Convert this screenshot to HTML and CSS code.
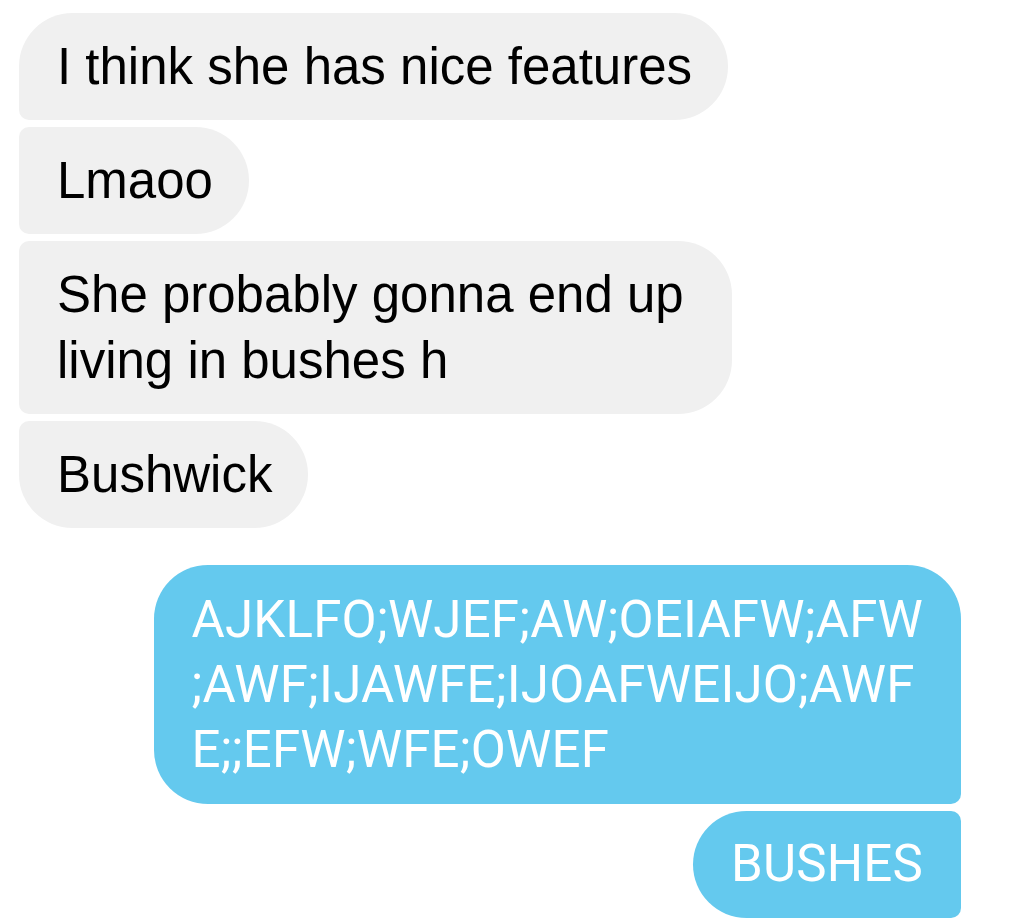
FILE: index.html
```html
<!DOCTYPE html>
<html lang="en">
<head>
    <meta charset="UTF-8">
    <meta name="viewport" content="width=device-width, initial-scale=1.0">
    <title>Messages</title>
    <link rel="stylesheet" href="styles.css">
</head>
<body>
    <div class="thread">
        <div class="group received">
            <div class="bubble first">I think she has nice features</div>
            <div class="bubble middle">Lmaoo</div>
            <div class="bubble middle wrapped">She probably gonna end up<br>living in bushes h</div>
            <div class="bubble last">Bushwick</div>
        </div>

        <div class="group sent">
            <div class="bubble first">AJKLFO;WJEF;AW;OEIAFW;AFW<br>;AWF;IJAWFE;IJOAFWEIJO;AWF<br>E;;EFW;WFE;OWEF</div>
            <div class="bubble middle">BUSHES</div>
        </div>
    </div>
</body>
</html>
```

FILE: styles.css
```css
body {
    margin: 0;
    background-color: #ffffff;
    font-family: "Liberation Sans", Arial, sans-serif;
}

.thread {
    padding: 13px 72px 0 19px;
    display: flex;
    flex-direction: column;
    gap: 37px;
}

.group {
    display: flex;
    flex-direction: column;
    gap: 7px;
}

.received {
    align-items: flex-start;
}

.sent {
    align-items: flex-end;
}

.bubble {
    font-size: 51px;
    line-height: 66px;
    padding: 21px 36px 20px 38px;
    border-radius: 54px;
    white-space: nowrap;
}

/* grey bubbles on the left */
.received .bubble {
    background-color: #f0f0f0;
    color: #000000;
}

.received .first {
    border-bottom-left-radius: 10px;
}

.received .middle {
    border-top-left-radius: 10px;
    border-bottom-left-radius: 10px;
}

.received .wrapped {
    padding-right: 48px;
}

.received .last {
    border-top-left-radius: 10px;
}

/* blue bubbles on the right */
.sent .bubble {
    background-color: #64c9ee;
    color: #ffffff;
    font-family: Roboto, "Liberation Sans", sans-serif;
    padding: 22px 38px 22px 38px;
    line-height: 65px;
    letter-spacing: 0.2px;
}

.sent .first {
    border-bottom-right-radius: 10px;
}

.sent .middle {
    border-top-right-radius: 10px;
    border-bottom-right-radius: 10px;
    padding: 20px 38px 21px 38px;
    line-height: 66px;
}
```
